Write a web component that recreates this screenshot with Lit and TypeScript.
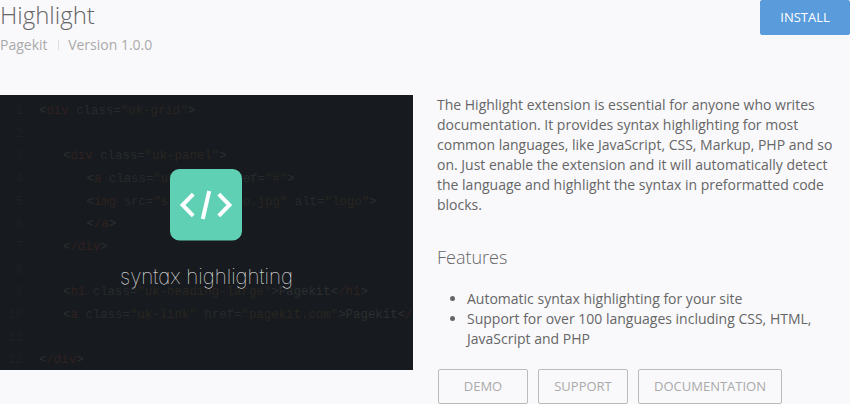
import { LitElement, html, css } from "lit";
import { customElement } from "lit/decorators.js";

type Token = [kind: "p" | "t" | "a" | "s", text: string];

const LINES: { indent: number; tokens: Token[] }[] = [
  { indent: 0, tokens: [["p", "<"], ["t", "div"], ["a", " class="], ["s", '"uk-grid"'], ["p", ">"]] },
  { indent: 0, tokens: [] },
  { indent: 1, tokens: [["p", "<"], ["t", "div"], ["a", " class="], ["s", '"uk-panel"'], ["p", ">"]] },
  { indent: 2, tokens: [["p", "<"], ["t", "a"], ["a", " class="], ["s", '"uk-logo"'], ["a", " href="], ["s", '"#"'], ["p", ">"]] },
  { indent: 2, tokens: [["p", "<"], ["t", "img"], ["a", " src="], ["s", '"storage/logo.jpg"'], ["a", " alt="], ["s", '"logo"'], ["p", ">"]] },
  { indent: 2, tokens: [["p", "<"], ["t", "/a"], ["p", ">"]] },
  { indent: 1, tokens: [["p", "<"], ["t", "/div"], ["p", ">"]] },
  { indent: 0, tokens: [] },
  { indent: 1, tokens: [["p", "<"], ["t", "h1"], ["a", " class="], ["s", '"uk-heading-large"'], ["p", ">Pagekit<"], ["t", "/h1"], ["p", ">"]] },
  { indent: 1, tokens: [["p", "<"], ["t", "a"], ["a", " class="], ["s", '"uk-link"'], ["a", " href="], ["s", '"pagekit.com"'], ["p", ">Pagekit<"], ["t", "/"]] },
  { indent: 0, tokens: [] },
  { indent: 0, tokens: [["p", "<"], ["t", "/div"], ["p", ">"]] },
];

@customElement("syntax-banner")
export class SyntaxBanner extends LitElement {
  static styles = css`
    :host {
      display: block;
      position: relative;
      width: 413px;
      height: 275px;
      overflow: hidden;
      background: #171a1e;
    }
    .code {
      padding-top: 5px;
      font: 12.4px/22.66px "Liberation Mono", monospace;
    }
    .line {
      display: flex;
      height: 22.66px;
      white-space: pre;
    }
    .number {
      flex: none;
      width: 23px;
      margin-right: 16px;
      text-align: right;
      color: #1e2125;
    }
    .i1 { padding-left: 24px; }
    .i2 { padding-left: 47.5px; }
    .p { color: #2c2f31; }
    .t { color: #2f2220; }
    .a { color: #272a2d; }
    .s { color: #292621; }
    .badge {
      position: absolute;
      left: 170px;
      top: 74px;
      width: 72px;
      height: 72px;
    }
    .caption {
      position: absolute;
      left: 0;
      right: 0;
      top: 168px;
      text-align: center;
      white-space: nowrap;
      font: 100 20.6px/28px Inter, sans-serif;
      font-feature-settings: "cv11" 1;
      color: #fff;
    }
  `;

  render() {
    return html`
      <div class="code">
        ${LINES.map(
          (line, i) => html`<div class="line"><span class="number">${i + 1}</span><span class="i${line.indent}">${line.tokens.map(
            ([kind, text]) => html`<span class=${kind}>${text}</span>`
          )}</span></div>`
        )}
      </div>
      <svg class="badge" viewBox="0 0 72 72">
        <rect width="72" height="71.5" rx="9.5" fill="#60d0b4" />
        <g fill="none" stroke="#fff" stroke-width="4">
          <path d="M23.2 25.2 12.6 36 23.2 46.8" />
          <path d="M48.8 25.2 59.4 36 48.8 46.8" />
          <path d="M39.2 22 32.8 50" />
        </g>
      </svg>
      <div class="caption">syntax highlighting</div>
    `;
  }
}

@customElement("app-root")
export class AppRoot extends LitElement {
  static styles = css`
    :host {
      display: block;
      height: 404px;
      overflow: hidden;
      background: #f9f9fb;
      color: #666;
      font: 14px/20px "Open Sans", sans-serif;
    }
    header {
      display: flex;
      justify-content: space-between;
      height: 95px;
    }
    h1 {
      margin: 0;
      font-size: 24px;
      line-height: 30px;
      font-weight: 300;
    }
    .meta {
      display: flex;
      align-items: center;
      margin-top: 5px;
      color: #aaa;
    }
    .meta span + span {
      margin-left: 10px;
      padding-left: 10.6px;
      background: linear-gradient(#ddd, #ddd) left center / 1px 10px no-repeat;
    }
    .button {
      box-sizing: border-box;
      height: 35px;
      border: 1px solid #bbb;
      border-radius: 2px;
      text-align: center;
      font-size: 13px;
      line-height: 33px;
      color: #aaa;
    }
    .install {
      width: 90px;
      border-color: #5a9bdc;
      background: #5a9bdc;
      color: #fff;
    }
    main {
      display: flex;
      gap: 24px;
    }
    .details { width: 402px; }
    p { margin: 0; }
    h2 {
      margin: 30px 0 0;
      font-size: 18px;
      line-height: 24px;
      font-weight: 300;
    }
    ul {
      margin: 20px 0;
      padding-left: 30px;
    }
    .actions {
      display: flex;
      gap: 10px;
      margin-left: 1px;
    }
    .small { width: 90px; }
    .wide { width: 144px; }
  `;

  render() {
    return html`
      <header>
        <div>
          <h1>Highlight</h1>
          <div class="meta"><span>Pagekit</span><span>Version 1.0.0</span></div>
        </div>
        <div class="button install">INSTALL</div>
      </header>
      <main>
        <syntax-banner></syntax-banner>
        <section class="details">
          <p>
            The Highlight extension is essential for anyone who writes documentation. It provides syntax
            highlighting for most common languages, like JavaScript, CSS, Markup, PHP and so on. Just enable the
            extension and it will automatically detect the language and highlight the syntax in preformatted code
            blocks.
          </p>
          <h2>Features</h2>
          <ul>
            <li>Automatic syntax highlighting for your site</li>
            <li>Support for over 100 languages including CSS, HTML, JavaScript and PHP</li>
          </ul>
          <div class="actions">
            <div class="button small">DEMO</div>
            <div class="button small">SUPPORT</div>
            <div class="button wide">DOCUMENTATION</div>
          </div>
        </section>
      </main>
    `;
  }
}
